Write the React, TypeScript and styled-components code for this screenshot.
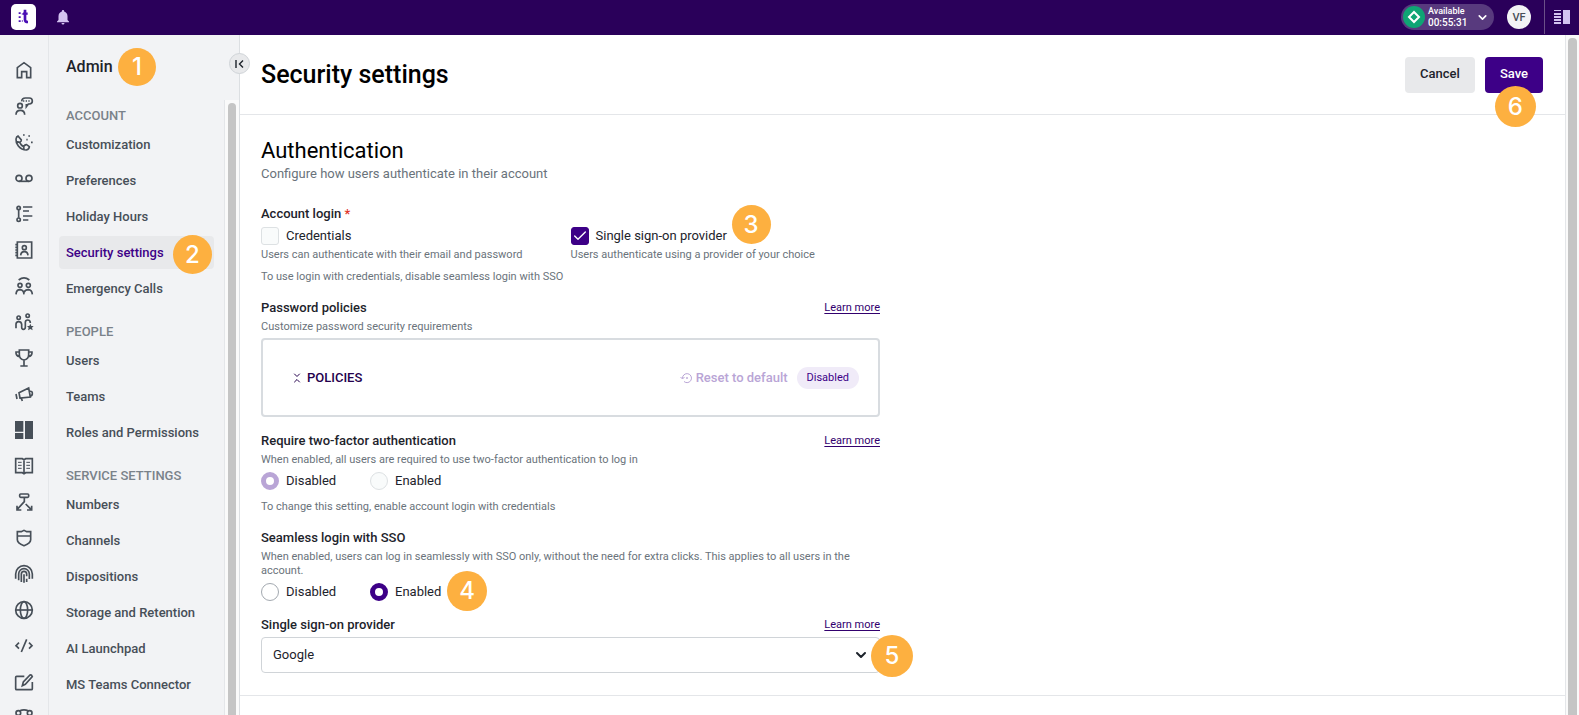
import React, { useState } from "react";
import styled, { createGlobalStyle, css } from "styled-components";
import { MdNotifications } from "react-icons/md";
import { Check, ChevronDown, ChevronsDownUp } from "lucide-react";

const c = {
  bar: "#2a005a",
  brand: "#3d0087",
  ink: "#1d232b",
  muted: "#6a737b",
  nav: "#474f58",
  panel: "#f2f3f5",
  line: "#e4e6e9",
  fill: "#e8e9eb",
  thumb: "#c5c5c5",
  note: "#fdb040",
};

const GlobalStyle = createGlobalStyle`
  *, *::before, *::after { box-sizing: border-box; }
  body { margin: 0; font-family: Roboto, "Liberation Sans", sans-serif; font-size: 13px; color: ${c.ink}; background: #fff; }
  button, select, input { font: inherit; margin: 0; }
  h1, h2, h3, p, ul, fieldset { margin: 0; padding: 0; border: 0; }
  ul { list-style: none; }
`;

const Shell = styled.div`
  height: 100vh;
  display: flex;
  flex-direction: column;
  overflow: hidden;
`;

/* top bar */

const TopBar = styled.header`
  flex: none;
  height: 35px;
  display: flex;
  align-items: center;
  padding: 0 0 1px 11px;
  background: ${c.bar};
  color: #fff;
`;

const Logo = styled.a`
  display: flex;
  width: 25px;
  height: 26px;
  border-radius: 5px;
  background: #fff;
`;

const BellButton = styled.button`
  display: flex;
  margin-left: 18px;
  padding: 0;
  border: 0;
  background: none;
  color: #d3c3f0;
`;

const TopRight = styled.div`
  margin-left: auto;
  height: 100%;
  display: flex;
  align-items: center;
`;

const StatusButton = styled.button`
  display: flex;
  align-items: center;
  width: 93px;
  height: 26px;
  padding: 0 5px 0 2px;
  border: 0;
  border-radius: 13px;
  background: #583a7e;
  color: #fff;
  text-align: left;

  > svg:last-child { margin-left: auto; }
`;

const StatusText = styled.span`
  display: flex;
  flex-direction: column;
  margin-left: 3px;
  font-size: 10px;
  line-height: 11px;
  font-weight: 500;
`;

const StatusName = styled.span`
  font-size: 9px;
`;

const Avatar = styled.button`
  width: 24px;
  height: 24px;
  margin: 0 13px;
  padding: 0;
  border: 0;
  border-radius: 50%;
  background: ${c.panel};
  color: ${c.nav};
  font-size: 11px;
  font-weight: 500;
`;

const PanelToggle = styled.button`
  height: 100%;
  width: 35px;
  display: flex;
  align-items: center;
  padding: 0 0 0 9px;
  border: 0;
  border-left: 1px solid #6b5088;
  background: none;
`;

/* body */

const Body = styled.div`
  flex: 1;
  min-height: 0;
  display: flex;
`;

const Rail = styled.nav`
  flex: none;
  width: 49px;
  display: flex;
  flex-direction: column;
  align-items: center;
  gap: 18px;
  padding-top: 26px;
  background: ${c.panel};
  border-right: 1px solid ${c.line};
  overflow: hidden;
`;

const RailLink = styled.a`
  display: flex;
  flex: none;
  color: ${c.nav};
`;

const Side = styled.aside`
  position: relative;
  flex: none;
  width: 191px;
  display: flex;
  flex-direction: column;
  background: ${c.panel};
  border-right: 1px solid #dcdfe2;
`;

const SideHead = styled.div`
  flex: none;
  height: 65px;
  display: flex;
  align-items: center;
  padding: 0 0 1px 17px;
`;

const SideTitle = styled.h2`
  position: relative;
  font-size: 16px;
  line-height: 24px;
  font-weight: 500;
`;

const Collapse = styled.button`
  position: absolute;
  z-index: 2;
  top: 18px;
  right: -11px;
  width: 21px;
  height: 21px;
  display: grid;
  place-items: center;
  padding: 0;
  border: 1px solid #d0d4d8;
  border-radius: 50%;
  background: ${c.fill};
  color: ${c.ink};
`;

const SideScroll = styled.div`
  flex: 1;
  min-height: 0;
  display: flex;
`;

const Menu = styled.div`
  flex: 1;
  display: flex;
  flex-direction: column;
  gap: 16px;
  padding: 5px 10px 0;
  overflow: hidden;
`;

const MenuHeading = styled.h3`
  margin-bottom: 1px;
  padding-left: 7px;
  font-size: 13px;
  line-height: 22px;
  font-weight: 500;
  color: #7a828a;
`;

const MenuList = styled.ul`
  display: flex;
  flex-direction: column;
  gap: 3px;
`;

const MenuItem = styled.li`
  position: relative;
`;

const MenuLink = styled.a<{ $active?: boolean }>`
  display: block;
  padding-left: 7px;
  border-radius: 4px;
  font-size: 13px;
  line-height: 33px;
  font-weight: 500;
  white-space: nowrap;
  text-decoration: none;
  color: ${c.nav};
  ${(p) => p.$active && css`background: ${c.fill}; color: ${c.brand};`}
`;

const Track = styled.div<{ $wide?: boolean }>`
  flex: none;
  width: ${(p) => (p.$wide ? 14 : 15)}px;
  padding: 3px ${(p) => (p.$wide ? 2 : 3)}px 0;
  border-left: 1px solid ${c.line};
  background: #fafafa;
`;

const Thumb = styled.div`
  height: 100%;
  border-radius: 4px 4px 0 0;
  background: ${c.thumb};
`;

/* main */

const Main = styled.main`
  flex: 1;
  min-width: 0;
  background: #fff;
`;

const PageHead = styled.div`
  height: 80px;
  display: flex;
  align-items: center;
  gap: 10px;
  padding: 0 22px 0 21px;
  border-bottom: 1px solid ${c.line};
`;

const PageTitle = styled.h1`
  margin-right: auto;
  font-size: 25px;
  line-height: 32px;
  font-weight: 500;
  color: #000;
`;

const Action = styled.button<{ $primary?: boolean }>`
  display: block;
  height: 36px;
  padding: 0 15px 2px;
  border: 0;
  border-radius: 4px;
  font-size: 13px;
  font-weight: 500;
  background: ${(p) => (p.$primary ? c.brand : c.fill)};
  color: ${(p) => (p.$primary ? "#fff" : c.ink)};
`;

const Anchor = styled.div`
  position: relative;
`;

const Form = styled.form`
  padding: 22px 21px;
  border-bottom: 1px solid ${c.line};
`;

const Column = styled.div`
  max-width: 619px;
`;

const SectionTitle = styled.h2`
  font-size: 22px;
  line-height: 28px;
  font-weight: 400;
  color: #000;
`;

const SectionText = styled.p`
  margin-bottom: 22px;
  font-size: 13px;
  line-height: 18px;
  color: ${c.muted};
`;

const Field = styled.div`
  position: relative;
  margin-bottom: 15px;
  &:last-child { margin-bottom: 0; }
`;

const FieldTop = styled.div`
  display: flex;
  justify-content: space-between;
  line-height: 18px;
`;

const FieldTitle = styled.span`
  font-weight: 500;
`;

const Required = styled.span`
  color: #e0352b;
`;

const Hint = styled.p<{ $gap?: number }>`
  margin-top: ${(p) => p.$gap ?? 3}px;
  font-size: 11px;
  line-height: 14px;
  color: ${c.muted};
`;

const Learn = styled.a`
  font-size: 11px;
  color: #32006e;
  text-underline-offset: 2px;
`;

const Pair = styled.div`
  display: grid;
  grid-template-columns: 1fr 1fr;
  margin-top: 4px;
`;

const Radios = styled.div`
  display: flex;
  margin-top: 5px;
`;

const Option = styled.label`
  position: relative;
  display: flex;
  align-items: center;
  gap: 7px;
  line-height: 18px;
  ${Radios} > & { width: 109px; }
`;

const Tick = styled.input`
  appearance: none;
  width: 18px;
  height: 18px;
  border: 1px solid #dde1e3;
  border-radius: 3px;
  background: #f9fbfb;
  &:checked { border-color: ${c.brand}; background: ${c.brand}; }
`;

const TickMark = styled(Check)`
  position: absolute;
  left: 1px;
  top: 1px;
  color: #fff;
  pointer-events: none;
`;

const Radio = styled.input`
  appearance: none;
  width: 18px;
  height: 18px;
  border: 1px solid #a3a9b0;
  border-radius: 50%;
  background: #fff;
  &:disabled { border-color: #dde1e3; background: #f9fbfb; }
  &:checked { border: 5px solid ${c.brand}; background: #fff; }
  &:checked:disabled { border-color: #b9a5d6; }
`;

const Box = styled.div`
  display: flex;
  align-items: center;
  height: 79px;
  margin-top: 4px;
  padding: 0 19px 0 28px;
  border: 2px solid #d8dce0;
  border-radius: 4px;
`;

const Toggle = styled.button`
  display: flex;
  align-items: center;
  gap: 4px;
  padding: 0;
  border: 0;
  background: none;
  font-weight: 500;
  color: #24004d;
`;

const Reset = styled.button`
  display: flex;
  align-items: center;
  gap: 4px;
  margin-left: auto;
  padding: 0;
  border: 0;
  background: none;
  font-weight: 500;
  color: #b9a5d6;
`;

const Pill = styled.span`
  margin-left: 9px;
  padding: 0 10px;
  border-radius: 11px;
  background: #f0ebf8;
  font-size: 11px;
  line-height: 22px;
  color: ${c.brand};
`;

const SelectWrap = styled.div`
  position: relative;
  margin-top: 3px;
`;

const Select = styled.select`
  appearance: none;
  width: 100%;
  height: 36px;
  padding: 0 11px 2px;
  border: 1px solid #d0d4d8;
  border-radius: 4px;
  background: #fff;
  color: ${c.ink};
`;

const SelectArrow = styled(ChevronDown)`
  position: absolute;
  right: 11px;
  top: 10px;
  pointer-events: none;
`;

const Note = styled.span<{ $size: number; $left: number; $top: number }>`
  position: absolute;
  z-index: 3;
  left: ${(p) => p.$left}px;
  top: ${(p) => p.$top}px;
  width: ${(p) => p.$size}px;
  height: ${(p) => p.$size}px;
  border-radius: 50%;
  background: ${c.note};
  color: #fff;
  font-family: Inter, sans-serif;
  font-size: 24px;
  line-height: ${(p) => p.$size}px;
  font-weight: 500;
  text-align: center;
`;

const railIcons: [string, React.ReactNode][] = [
  ["Home", <path d="M7 50V20L27 5L47 20V50H35V32H20V50Z" />],
  ["Conversations", <><circle cx="15" cy="26" r="7" /><path d="M3 53Q3 40 16 40Q29 40 29 53M20 13Q21 3 31 3H43Q52 3 52 12Q52 21 43 21H40L34 29V21" /><path d="M24 12h4M32 12h4M40 12h4" /></>],
  ["Calls", <><path d="M9 9L19 21Q20 25 14 28Q18 37 26 41Q30 34 35 35L43 41Q43 48 34 51Q20 51 10 39Q2 29 3 18Q4 11 9 9ZM5 26L14 28M26 41L27 50" /><path d="M24 6h5M40 9h5M34 20h4M48 28h5" /></>],
  ["Voicemail", <><circle cx="12" cy="28" r="9" /><circle cx="42" cy="28" r="9" /><path d="M12 37H42" /></>],
  ["Activity", <><circle cx="11" cy="9" r="5" /><circle cx="11" cy="44" r="5" /><path d="M11 15V38M24 6H52M24 18H42M24 33H52M24 45H40" /></>],
  ["Contacts", <><path d="M7 3H50V51H7ZM1 11H9M1 19H9M1 27H9M1 35H9M1 43H9" /><circle cx="28" cy="20" r="6" /><path d="M17 43Q18 32 28 32Q38 32 39 43" /></>],
  ["Teams", <><circle cx="15" cy="25" r="6" /><circle cx="40" cy="25" r="6" /><path d="M3 52Q4 38 15 38Q26 39 27 52M27 46Q31 38 40 38Q51 39 52 52M11 9Q27 -4 43 9" /></>],
  ["Workforce", <><circle cx="11" cy="14" r="5" /><circle cx="38" cy="8" r="5" /><path d="M3 46V34Q3 26 11 26Q19 26 20 34V42Q20 49 25 49Q31 49 31 42V28Q31 21 38 21Q46 21 46 30" /><path d="M46 32l3 7h7l-5 5 2 8-7-4-7 4 2-8-5-5h7z" fill="currentColor" stroke="none" /></>],
  ["Performance", <path d="M13 3H41V17Q41 30 27 33Q13 30 13 17ZM12 9H3Q2 21 14 23M42 9H51Q52 21 40 23M27 33V51M16 51H38" />],
  ["Campaigns", <path d="M12 23L41 9L46 36L15 39ZM3 27L6 42M19 40L22 48M43 19Q53 17 52 27Q51 33 45 33" />],
  ["Dashboards", <path d="M0 0H25V32H0ZM0 36H25V54H0ZM30 0H54V54H30Z" fill="currentColor" stroke="none" />],
  ["Knowledge", <><path d="M2 5H22L27 8L32 5H52V47H32L27 50L22 47H2ZM27 8V50" /><path d="M9 16H20M9 25H20M9 34H20M34 16H45M34 25H45M34 34H45" strokeWidth="3" /></>],
  ["Flows", <><rect x="14" y="3" width="27" height="10" rx="3" /><path d="M28 13V26L6 50M32 33L49 50M6 38V51H19M36 51H50V38" /></>],
  ["Guardian", <path d="M7 8H19L27 4L35 8H47V32Q47 42 27 50Q7 42 7 32ZM7 21H47" />],
  ["Identity", <path d="M2 41V27A25 25 0 0 1 52 27V41M11 46V27A16 16 0 0 1 43 27V42M19 51V27A8 8 0 0 1 35 27V34M27 28V53M35 41V51" />],
  ["Languages", <><circle cx="27" cy="27" r="25" /><ellipse cx="27" cy="27" rx="11" ry="25" /><path d="M2 27H52" /></>],
  ["Developers", <path d="M12 17L3 26L12 35M42 17L51 26L42 35M35 7L19 45" />],
  ["Compose", <path d="M28 10H5Q2 10 2 13V47Q2 50 5 50H49Q52 50 52 47V27M22 38L25 27L45 6Q50 5 52 11L31 34Z" />],
  ["Integrations", <><circle cx="10" cy="12" r="7" /><circle cx="44" cy="12" r="7" /><path d="M14 5Q27 0 40 5M10 19V44H44V19" /></>],
];

const menu = [
  { title: "ACCOUNT", items: ["Customization", "Preferences", "Holiday Hours", "Security settings", "Emergency Calls"] },
  { title: "PEOPLE", items: ["Users", "Teams", "Roles and Permissions"] },
  { title: "SERVICE SETTINGS", items: ["Numbers", "Channels", "Dispositions", "Storage and Retention", "AI Launchpad", "MS Teams Connector"] },
];

export default function App() {
  const [seamless, setSeamless] = useState("enabled");
  const [sso, setSso] = useState(true);

  return (
    <>
      <GlobalStyle />
      <Shell>
        <TopBar>
          <Logo href="#" aria-label="Home">
            <svg width="25" height="26" viewBox="0 0 75 78" fill="none" stroke="#4a0fb4">
              <path d="M26 25V30M26 37V42M26 49V54" strokeWidth="6" />
              <path d="M34 28V32M34 49V53" strokeWidth="3" />
              <path d="M42 17V47Q42 54 51 54" strokeWidth="8" />
              <path d="M36 29H50" strokeWidth="7" />
            </svg>
          </Logo>
          <BellButton type="button" aria-label="Notifications"><MdNotifications size={18} /></BellButton>
          <TopRight>
            <StatusButton type="button">
              <svg width="22" height="22" viewBox="0 0 22 22" fill="none">
                <circle cx="11" cy="11" r="11" fill="#0fa574" />
                <path d="M11 6L16 11L11 16L6 11Z" stroke="#fff" strokeWidth="2" />
              </svg>
              <StatusText>
                <StatusName>Available</StatusName>
                <span>00:55:31</span>
              </StatusText>
              <ChevronDown size={13} strokeWidth={3} />
            </StatusButton>
            <Avatar type="button">VF</Avatar>
            <PanelToggle type="button" aria-label="Toggle side panel">
              <svg width="16" height="14" viewBox="0 0 16 14" fill="#d3c3f0">
                <path d="M0 0H7V1H0ZM0 3H7V5H0ZM0 6H7V8H0ZM0 9H7V11H0ZM0 12H7V14H0ZM9 0H16V14H9Z" />
              </svg>
            </PanelToggle>
          </TopRight>
        </TopBar>

        <Body>
          <Rail aria-label="Apps">
            {railIcons.map(([name, art]) => (
              <RailLink key={name} href="#" aria-label={name}>
                <svg width="18" height="18" viewBox="0 0 54 54" fill="none" stroke="currentColor" strokeWidth="5" overflow="visible">{art}</svg>
              </RailLink>
            ))}
          </Rail>

          <Side>
            <SideHead>
              <SideTitle>Admin<Note $size={38} $left={52} $top={-7}>1</Note></SideTitle>
            </SideHead>
            <Collapse type="button" aria-label="Collapse menu">
              <svg width="9" height="10" viewBox="0 0 9 10" fill="none" stroke="currentColor" strokeWidth="1.4">
                <path d="M1 1V9M8 1.5L4.5 5L8 8.500" />
              </svg>
            </Collapse>
            <SideScroll>
              <Menu>
                {menu.map((g) => (
                  <section key={g.title}>
                    <MenuHeading>{g.title}</MenuHeading>
                    <MenuList>
                      {g.items.map((item) => {
                        const active = item === "Security settings";
                        return (
                          <MenuItem key={item}>
                            <MenuLink href="#" $active={active}>{item}</MenuLink>
                            {active && <Note $size={39} $left={114} $top={-1}>2</Note>}
                          </MenuItem>
                        );
                      })}
                    </MenuList>
                  </section>
                ))}
              </Menu>
              <Track><Thumb /></Track>
            </SideScroll>
          </Side>

          <Main>
            <PageHead>
              <PageTitle>Security settings</PageTitle>
              <Action type="button">Cancel</Action>
              <Anchor>
                <Action type="submit" form="security" $primary>Save</Action>
                <Note $size={41} $left={10} $top={29}>6</Note>
              </Anchor>
            </PageHead>

            <Form id="security" onSubmit={(e) => e.preventDefault()}>
              <Column>
                <SectionTitle>Authentication</SectionTitle>
                <SectionText>Configure how users authenticate in their account</SectionText>

                <Field role="group" aria-labelledby="login-title">
                  <FieldTop><FieldTitle id="login-title">Account login <Required>*</Required></FieldTitle></FieldTop>
                  <Pair>
                    <div>
                      <Option><Tick type="checkbox" disabled />Credentials</Option>
                      <Hint>Users can authenticate with their email and password</Hint>
                    </div>
                    <Anchor>
                      <Option>
                        <Tick type="checkbox" checked={sso} onChange={(e) => setSso(e.target.checked)} />
                        {sso && <TickMark size={16} strokeWidth={2} />}
                        Single sign-on provider
                      </Option>
                      <Hint>Users authenticate using a provider of your choice</Hint>
                      <Note $size={39} $left={161} $top={-22}>3</Note>
                    </Anchor>
                  </Pair>
                  <Hint $gap={8}>To use login with credentials, disable seamless login with SSO</Hint>
                </Field>

                <Field>
                  <FieldTop><FieldTitle>Password policies</FieldTitle><Learn href="#">Learn more</Learn></FieldTop>
                  <Hint>Customize password security requirements</Hint>
                  <Box>
                    <Toggle type="button"><ChevronsDownUp size={12} />POLICIES</Toggle>
                    <Reset type="button" disabled>
                      <svg width="12" height="12" viewBox="0 0 24 24" fill="none" stroke="currentColor" strokeWidth="2">
                        <path d="M5 13A9 9 0 1 1 8 19M1 10L5 14L9 10" />
                        <circle cx="14" cy="12" r="1" fill="currentColor" />
                      </svg>
                      Reset to default
                    </Reset>
                    <Pill>Disabled</Pill>
                  </Box>
                </Field>

                <Field role="radiogroup" aria-labelledby="tfa-title">
                  <FieldTop><FieldTitle id="tfa-title">Require two-factor authentication</FieldTitle><Learn href="#">Learn more</Learn></FieldTop>
                  <Hint>When enabled, all users are required to use two-factor authentication to log in</Hint>
                  <Radios>
                    <Option><Radio type="radio" name="tfa" disabled defaultChecked />Disabled</Option>
                    <Option><Radio type="radio" name="tfa" disabled />Enabled</Option>
                  </Radios>
                  <Hint $gap={10}>To change this setting, enable account login with credentials</Hint>
                </Field>

                <Field role="radiogroup" aria-labelledby="seamless-title">
                  <FieldTop><FieldTitle id="seamless-title">Seamless login with SSO</FieldTitle></FieldTop>
                  <Hint>When enabled, users can log in seamlessly with SSO only, without the need for extra clicks. This applies to all users in the account.</Hint>
                  <Radios>
                    <Option><Radio type="radio" name="seamless" checked={seamless === "disabled"} onChange={() => setSeamless("disabled")} />Disabled</Option>
                    <Option>
                      <Radio type="radio" name="seamless" checked={seamless === "enabled"} onChange={() => setSeamless("enabled")} />
                      Enabled
                      <Note $size={40} $left={77} $top={-12} aria-hidden>4</Note>
                    </Option>
                  </Radios>
                </Field>

                <Field>
                  <FieldTop><FieldTitle as="label" htmlFor="provider">Single sign-on provider</FieldTitle><Learn href="#">Learn more</Learn></FieldTop>
                  <SelectWrap>
                    <Select id="provider" defaultValue="Google"><option>Google</option></Select>
                    <SelectArrow size={16} strokeWidth={3} />
                    <Note $size={42} $left={610} $top={-2}>5</Note>
                  </SelectWrap>
                </Field>
              </Column>
            </Form>
          </Main>
          <Track $wide><Thumb /></Track>
        </Body>
      </Shell>
    </>
  );
}
